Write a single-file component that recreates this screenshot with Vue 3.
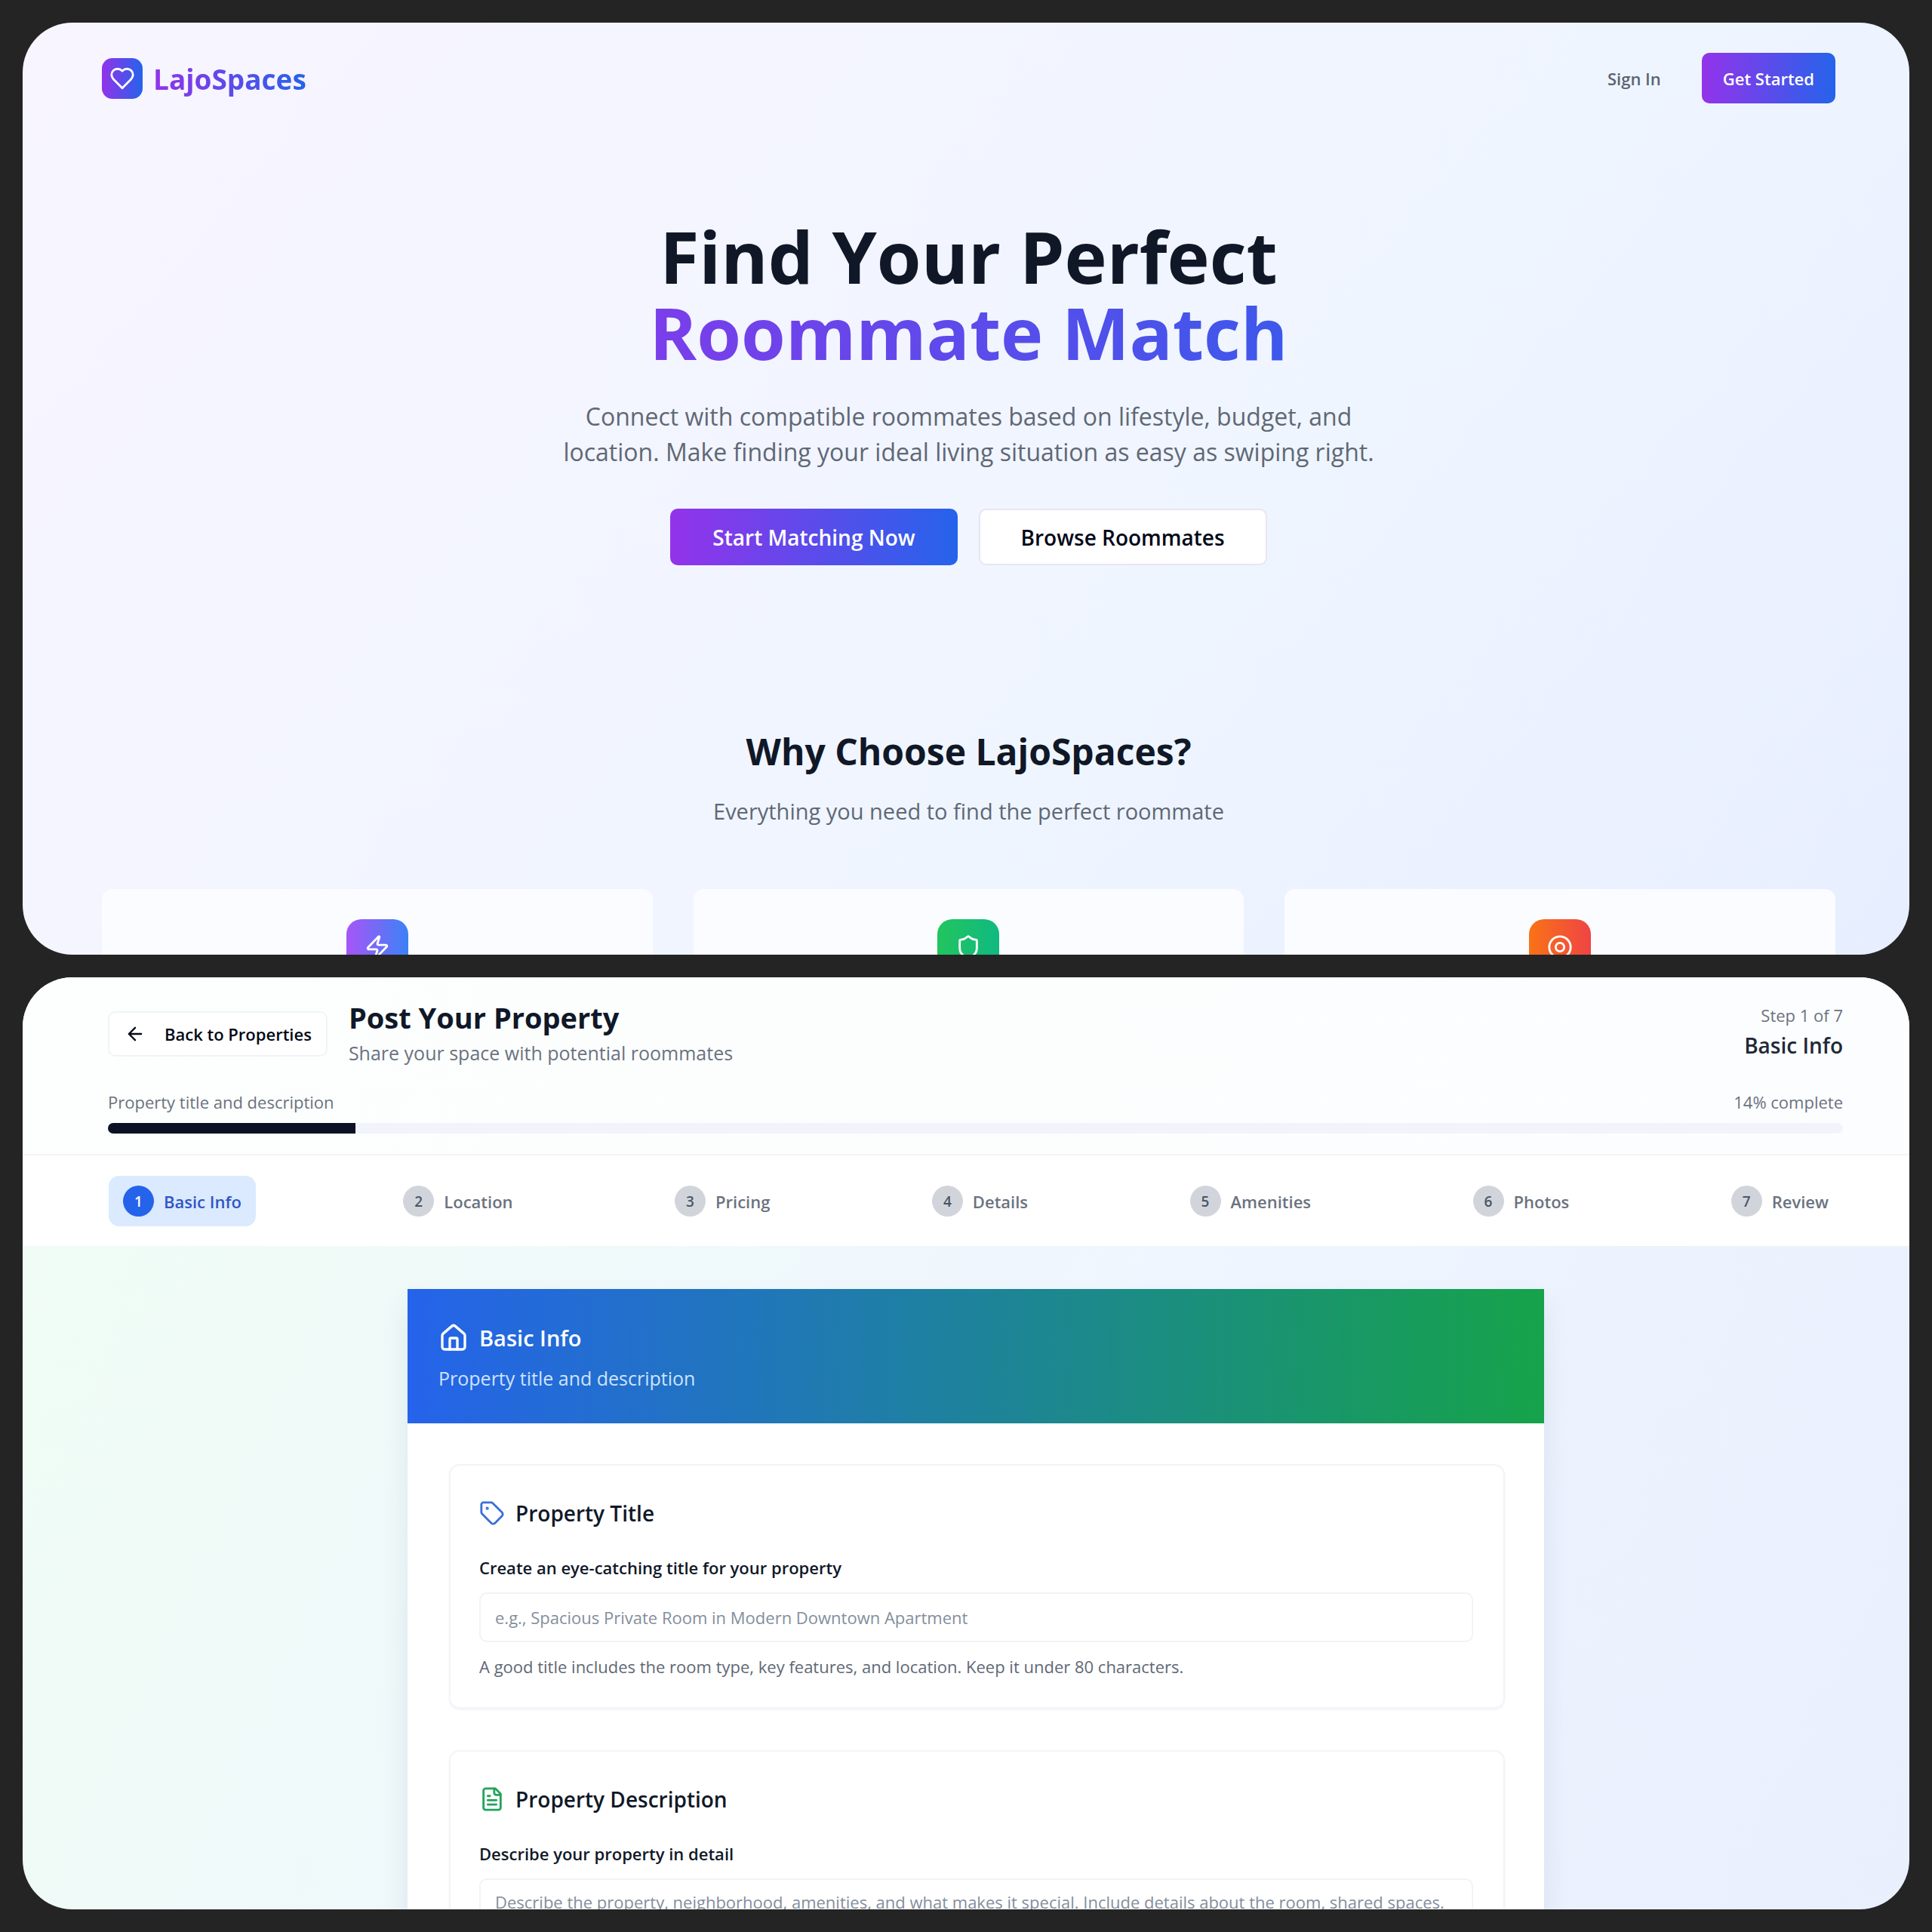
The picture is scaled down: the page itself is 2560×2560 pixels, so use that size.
<script setup>
import { ref } from 'vue'

const features = ['zap', 'shield', 'target']
const steps = ['Basic Info', 'Location', 'Pricing', 'Details', 'Amenities', 'Photos', 'Review']
const current = ref(0)
const percent = 100 / steps.length
const title = ref('')
const description = ref('')
</script>

<template>
  <div class="board">
    <section class="panel landing">
      <header class="nav">
        <a class="brand" href="#">
          <span class="brand-mark">
            <svg class="icon" viewBox="0 0 24 24"><path d="M19 14c1.49-1.46 3-3.21 3-5.5A5.5 5.5 0 0 0 16.500 3c-1.760 0-3 .5-4.500 2-1.500-1.500-2.740-2-4.500-2A5.500 5.500 0 0 0 2 8.500c0 2.300 1.500 4.050 3 5.500l7 7Z" /></svg>
          </span>
          <span class="brand-name">LajoSpaces</span>
        </a>
        <nav class="nav-links">
          <a class="sign-in" href="#">Sign In</a>
          <button class="btn primary small" type="button">Get Started</button>
        </nav>
      </header>

      <div class="hero">
        <h1>Find Your Perfect <span>Roommate Match</span></h1>
        <p>Connect with compatible roommates based on lifestyle, budget, and<br />location. Make finding your ideal living situation as easy as swiping right.</p>
        <div class="cta">
          <button class="btn primary" type="button">Start Matching Now</button>
          <button class="btn outline" type="button">Browse Roommates</button>
        </div>
      </div>

      <div class="why">
        <h2>Why Choose LajoSpaces?</h2>
        <p>Everything you need to find the perfect roommate</p>
      </div>

      <div class="features">
        <article v-for="name in features" :key="name" class="feature">
          <span class="tile" :class="name">
            <svg class="icon" viewBox="0 0 24 24">
              <path v-if="name === 'zap'" d="M4 14a1 1 0 0 1-.78-1.63l9.900-10.200a.5.5 0 0 1 .86.46l-1.920 6.020A1 1 0 0 0 13 10h7a1 1 0 0 1 .78 1.630l-9.900 10.200a.5.5 0 0 1-.86-.46l1.920-6.020A1 1 0 0 0 11 14z" />
              <path v-else-if="name === 'shield'" d="M20 13c0 5-3.500 7.500-7.660 8.950a1 1 0 0 1-.67-.01C7.500 20.500 4 18 4 13V6a1 1 0 0 1 1-1c2 0 4.500-1.200 6.240-2.720a1.170 1.170 0 0 1 1.520 0C14.510 3.810 17 5 19 5a1 1 0 0 1 1 1z" />
              <g v-else><circle cx="12" cy="12" r="10" /><circle cx="12" cy="12" r="4" /></g>
            </svg>
          </span>
        </article>
      </div>
    </section>

    <section class="panel posting">
      <header class="top">
        <div class="top-row">
          <button class="back" type="button">
            <svg class="icon" viewBox="0 0 24 24"><path d="m12 19-7-7 7-7M19 12H5" /></svg>
            Back to Properties
          </button>
          <div class="heading">
            <h2>Post Your Property</h2>
            <p>Share your space with potential roommates</p>
          </div>
          <div class="counter">
            <span>Step 1 of 7</span>
            <strong>Basic Info</strong>
          </div>
        </div>
        <div class="progress-text">
          <span>Property title and description</span>
          <span>14% complete</span>
        </div>
        <div class="bar"><div class="fill" :style="{ width: percent + '%' }"></div></div>
      </header>

      <nav class="steps">
        <button
          v-for="(step, i) in steps"
          :key="step"
          class="step"
          :class="{ active: i === current }"
          type="button"
          @click="current = i"
        >
          <span class="num">{{ i + 1 }}</span>{{ step }}
        </button>
      </nav>

      <main class="body">
        <form class="form" @submit.prevent>
          <div class="form-head">
            <h3>
              <svg class="icon" viewBox="0 0 24 24"><path d="M15 21v-8a1 1 0 0 0-1-1h-4a1 1 0 0 0-1 1v8" /><path d="M3 10a2 2 0 0 1 .71-1.530l7-6a2 2 0 0 1 2.580 0l7 6A2 2 0 0 1 21 10v9a2 2 0 0 1-2 2H5a2 2 0 0 1-2-2z" /></svg>
              Basic Info
            </h3>
            <p>Property title and description</p>
          </div>
          <div class="form-body">
            <section class="field">
              <h4>
                <svg class="icon blue" viewBox="0 0 24 24"><path d="M12.590 2.590A2 2 0 0 0 11.170 2H4a2 2 0 0 0-2 2v7.170a2 2 0 0 0 .59 1.420l8.700 8.700a2.430 2.430 0 0 0 3.420 0l6.580-6.580a2.430 2.430 0 0 0 0-3.420z" /><circle class="dot" cx="7.500" cy="7.500" r=".5" /></svg>
                Property Title
              </h4>
              <label for="title">Create an eye-catching title for your property</label>
              <input id="title" v-model="title" type="text" placeholder="e.g., Spacious Private Room in Modern Downtown Apartment" />
              <p class="hint">A good title includes the room type, key features, and location. Keep it under 80 characters.</p>
            </section>
            <section class="field">
              <h4>
                <svg class="icon green" viewBox="0 0 24 24"><path d="M15 2H6a2 2 0 0 0-2 2v16a2 2 0 0 0 2 2h12a2 2 0 0 0 2-2V7Z" /><path d="M14 2v4a2 2 0 0 0 2 2h4M10 9H8M16 13H8M16 17H8" /></svg>
                Property Description
              </h4>
              <label for="description">Describe your property in detail</label>
              <textarea id="description" v-model="description" rows="4" placeholder="Describe the property, neighborhood, amenities, and what makes it special. Include details about the room, shared spaces."></textarea>
            </section>
          </div>
        </form>
      </main>
    </section>
  </div>
</template>

<style>
body {
  margin: 0;
  background: #242424;
}
</style>

<style scoped>
* {
  box-sizing: border-box;
}

h1, h2, h3, h4, p {
  margin: 0;
}

button, input, textarea {
  font: inherit;
}

button {
  cursor: pointer;
}

a {
  text-decoration: none;
}

.board {
  display: grid;
  grid-template-rows: minmax(0, 1fr) minmax(0, 1fr);
  gap: 30px;
  height: 100vh;
  padding: 30px;
  background: #242424;
  font-family: "Open Sans", "Noto Sans", sans-serif;
  font-size: 22px;
  line-height: 34px;
  color: #101828;
}

.panel {
  overflow: hidden;
  border-radius: 66px;
}

.icon {
  flex: none;
  width: 34px;
  height: 34px;
  fill: none;
  stroke: currentColor;
  stroke-width: 2;
  stroke-linecap: round;
  stroke-linejoin: round;
}

/* Landing page */
.landing {
  padding: 40px 98px 0 105px;
  background: linear-gradient(130deg, #f8f5ff 0%, #eff5ff 62%, #e7eeff 100%);
}

.nav,
.brand,
.nav-links,
.cta {
  display: flex;
  align-items: center;
}

.nav {
  justify-content: space-between;
}

.brand {
  gap: 14px;
}

.brand-mark {
  display: grid;
  place-items: center;
  width: 54px;
  height: 54px;
  border-radius: 14px;
  background: linear-gradient(90deg, #9333ea, #2563eb);
  color: #fff;
}

.brand-name {
  padding-top: 2px;
  font-size: 37px;
  line-height: 58px;
  font-weight: 700;
  background: linear-gradient(90deg, #9333ea, #2563eb);
  background-clip: text;
  color: transparent;
}

.nav-links {
  gap: 54px;
}

.sign-in {
  font-weight: 600;
  color: #5b6472;
}

.btn {
  padding: 0 54px;
  height: 75px;
  border: 2px solid transparent;
  border-radius: 10px;
  font-size: 28px;
  font-weight: 600;
}

.primary {
  border: 0;
  padding: 0 56px;
  background: linear-gradient(90deg, #9333ea, #2563eb);
  color: #fff;
}

.small {
  height: 67px;
  padding: 0 28px;
  font-size: 22px;
}

.outline {
  background: #fff;
  border-color: #e7e5f3;
  color: #020817;
}

.hero {
  max-width: 1517px;
  margin: 152px auto 0;
  text-align: center;
}

.hero h1 {
  font-size: 95px;
  line-height: 101px;
  font-weight: 700;
}

.hero h1 span {
  display: block;
  background: linear-gradient(90deg, #9333ea, #2563eb);
  background-clip: text;
  color: transparent;
}

.hero p {
  margin-top: 37px;
  font-size: 32px;
  line-height: 47px;
  color: #5f6875;
}

.cta {
  justify-content: center;
  gap: 28px;
  margin-top: 52px;
}

.why {
  margin-top: 217px;
  text-align: center;
}

.why h2 {
  font-size: 48px;
  line-height: 60px;
  font-weight: 700;
}

.why p {
  margin-top: 26px;
  font-size: 29px;
  line-height: 46px;
  color: #5f6875;
}

.features {
  display: grid;
  grid-template-columns: repeat(3, 1fr);
  gap: 54px;
  margin-top: 80px;
}

.feature {
  display: flex;
  justify-content: center;
  height: 400px;
  padding-top: 40px;
  border-radius: 14px;
  background: #fbfcff;
}

.tile {
  display: grid;
  justify-items: center;
  width: 82px;
  height: 82px;
  padding-top: 20px;
  border-radius: 20px;
  color: #fff;
}

.tile .icon {
  width: 34px;
  height: 34px;
}

.zap {
  background: linear-gradient(90deg, #a855f7, #3b82f6);
}

.shield {
  background: linear-gradient(90deg, #22c55e, #10b981);
}

.target {
  background: linear-gradient(90deg, #f97316, #ef4444);
}

/* Property form */
.posting {
  background: linear-gradient(115deg, #f0fdf4 0%, #eff6ff 55%, #e9effd 100%);
}

.top {
  padding: 28px 88px 27px 113px;
  border-bottom: 2px solid #f2f5f7;
  background: linear-gradient(90deg, #fcfffd, #fcfdff);
}

.top-row {
  display: flex;
  align-items: center;
  gap: 28px;
}

.back {
  display: flex;
  align-items: center;
  gap: 25px;
  height: 60px;
  padding: 0 19px 0 20px;
  border: 2px solid #f1f4f6;
  border-radius: 10px;
  background: #fff;
  font-weight: 600;
  color: #020817;
}

.back .icon {
  width: 28px;
  height: 28px;
}

.heading h2 {
  font-size: 38px;
  line-height: 50px;
  font-weight: 700;
}

.heading p {
  font-size: 25px;
  line-height: 44px;
  color: #6b7280;
}

.counter {
  display: flex;
  flex-direction: column;
  margin-left: auto;
  padding-bottom: 10px;
  text-align: right;
  line-height: 40px;
  color: #6b7280;
}

.counter strong {
  font-size: 28px;
  font-weight: 600;
  color: #1f2937;
}

.progress-text {
  display: flex;
  justify-content: space-between;
  margin: 26px 0 11px;
  color: #6b7280;
}

.bar {
  height: 14px;
  overflow: hidden;
  border-radius: 7px;
  background: #f1f4fa;
}

.fill {
  height: 100%;
  background: #0b1226;
}

.steps {
  display: flex;
  justify-content: space-between;
  padding: 27px 88px 26px 114px;
  background: #fff;
}

.step {
  display: flex;
  align-items: center;
  gap: 13px;
  padding: 13px 19px;
  border: 0;
  border-radius: 14px;
  background: none;
  font-weight: 600;
  color: #6b7280;
}

.num {
  display: grid;
  place-items: center;
  width: 41px;
  height: 41px;
  border-radius: 50%;
  background: #d1d5db;
  font-size: 19px;
  color: #4b5563;
}

.step.active {
  background: #dbeafe;
  color: #2f55c8;
}

.active .num {
  background: #2563eb;
  color: #fff;
}

.body {
  padding: 57px 88px 0 114px;
}

.form {
  max-width: 1506px;
  margin: 0 auto;
  background: #fff;
  box-shadow: 0 20px 34px rgba(40, 60, 110, 0.1);
}

.form-head {
  padding: 41px 41px 40px;
  background: linear-gradient(90deg, #2563eb, #16a34a);
  color: #fff;
}

.form-head h3 {
  display: flex;
  align-items: center;
  gap: 14px;
  font-size: 29px;
  line-height: 48px;
  font-weight: 600;
}

.form-head .icon {
  width: 40px;
  height: 40px;
}

.form-head p {
  margin-top: 9px;
  font-size: 25px;
  line-height: 40px;
  color: #cfe3fb;
}

.form-body {
  display: flex;
  flex-direction: column;
  gap: 55px;
  padding: 54px 52px 54px 55px;
}

.field {
  display: flex;
  flex-direction: column;
  padding: 40px 40px 37px 38px;
  border: 2px solid #f1f4f8;
  border-radius: 14px;
  background: #fff;
  box-shadow: 0 2px 3px rgba(30, 41, 90, 0.05);
}

.field h4 {
  display: flex;
  align-items: center;
  gap: 14px;
  font-size: 28px;
  line-height: 46px;
  font-weight: 600;
}

.blue {
  color: #3b6fd8;
}

.dot {
  fill: currentColor;
}

.green {
  color: #22a35a;
}

.field label {
  margin: 32px 0 16px;
  font-weight: 600;
}

input,
textarea {
  width: 100%;
  border: 2px solid #f1f3f6;
  border-radius: 10px;
  background: #fff;
  color: #020817;
}

input {
  height: 66px;
  padding: 0 19px;
}

textarea {
  display: block;
  height: 140px;
  padding: 12px 19px;
  resize: none;
}

input::placeholder,
textarea::placeholder {
  color: #848e9d;
  opacity: 1;
}

.hint {
  margin-top: 15px;
  color: #5f6875;
}
</style>
